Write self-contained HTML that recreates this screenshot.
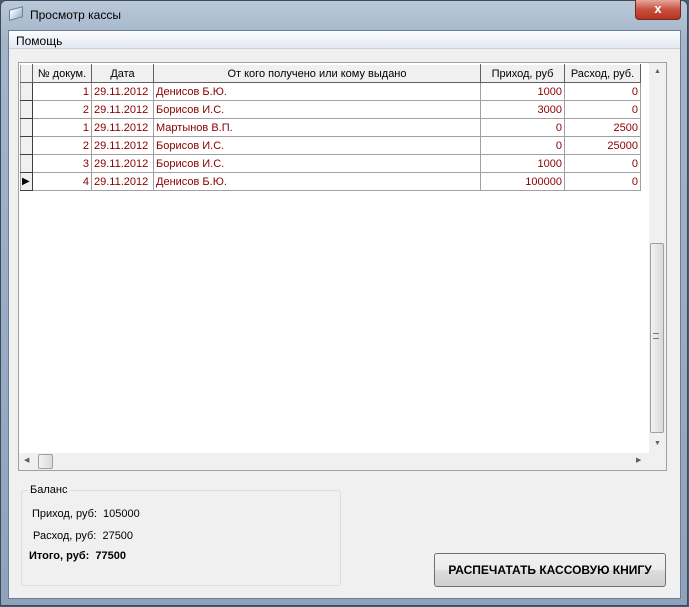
<!DOCTYPE html>
<html><head><meta charset="utf-8"><style>
*{margin:0;padding:0;box-sizing:border-box}
body{width:689px;height:607px;overflow:hidden;background:#4a5a6e;font-family:"Liberation Sans",sans-serif;font-size:11px;position:relative}
.frame{position:absolute;left:0;top:0;width:688px;height:606px;background:linear-gradient(#b9c8d9,#a3b5ca 40px,#8ea3bb);border:1px solid #3c4a5a;border-radius:6px 6px 0 0}
.title{position:absolute;left:30px;top:8px;font-size:12px;color:#000}
.close{position:absolute;left:635px;top:0;width:46px;height:20px;border:1px solid #6e2b22;border-top:none;border-radius:0 0 4px 4px;background:linear-gradient(#e6a89c,#c8503e 50%,#b53522);color:#fff;font-weight:bold;font-size:13px;text-align:center;line-height:18px}
.client{position:absolute;left:8px;top:30px;width:673px;height:569px;background:#f0f0f0;border:1px solid #6d7e92}
.menu{position:absolute;left:0;top:0;width:671px;height:18px;background:linear-gradient(#fbfcfe,#e3e9f2);border-bottom:1px solid #c8d0dc;padding:3px 0 0 7px;font-size:12px}
.grid{position:absolute;left:9px;top:31px;width:649px;height:409px;border:1px solid #a0a0a0;background:#fff}
table{position:absolute;left:1px;top:1px;border-collapse:collapse;font-size:11px;table-layout:fixed}
td{height:18px;border:1px solid #a0a0a0;padding:0 2px;color:#8b0000;white-space:nowrap;overflow:hidden}
th{height:18px;font-weight:normal;border:1px solid #606060;border-top:1px solid #fff;border-left:1px solid #fff;background:#f0f0f0;color:#000;text-align:center;white-space:nowrap;overflow:hidden}
td.ind{background:#f0f0f0;border-right:1px solid #404040;border-bottom:1px solid #404040}
.r{text-align:right}
.vs{position:absolute;left:630px;top:0;width:17px;height:390px;background:#f0f0f0}
.hs{position:absolute;left:0;top:390px;width:647px;height:17px;background:#f0f0f0}
.thumb{position:absolute;background:linear-gradient(90deg,#f2f2f2,#d9d9d9);border:1px solid #a0a0a0;border-radius:2px}
.grp{position:absolute;left:12px;top:459px;width:320px;height:96px;border:1px solid #d5dfe5;border-radius:3px}
.grp .lg{position:absolute;left:6px;top:-7px;background:#f0f0f0;padding:0 2px;font-size:11px}
.lab{position:absolute;font-size:11px}
.btn{position:absolute;left:425px;top:522px;width:232px;height:34px;border:1px solid #707070;border-radius:3px;background:linear-gradient(#f2f2f2,#ebebeb 50%,#dddddd 51%,#cfcfcf);font-weight:bold;font-size:12px;text-align:center;line-height:32px}
</style></head><body>
<div class="frame"></div>
<div style="position:absolute;left:9px;top:8px;width:14px;height:11px;background:linear-gradient(135deg,#fff,#9cb3d6);border:1px solid #6a7f9c;transform:skewY(-15deg)"></div>
<div class="title">Просмотр кассы</div>
<div class="close">x</div>
<div class="client">
<div class="menu">Помощь</div>
<div class="grid">
<table style="width:620px">
<colgroup><col style="width:12px"><col style="width:59px"><col style="width:62px"><col style="width:327px"><col style="width:84px"><col style="width:76px"></colgroup>
<tr><th style="border-left:1px solid #a0a0a0"></th><th>№ докум.</th><th>Дата</th><th>От кого получено или кому выдано</th><th>Приход, руб</th><th>Расход, руб.</th></tr>
<tr><td class="ind"></td><td class="r">1</td><td>29.11.2012</td><td>Денисов Б.Ю.</td><td class="r">1000</td><td class="r">0</td></tr>
<tr><td class="ind"></td><td class="r">2</td><td>29.11.2012</td><td>Борисов И.С.</td><td class="r">3000</td><td class="r">0</td></tr>
<tr><td class="ind"></td><td class="r">1</td><td>29.11.2012</td><td>Мартынов В.П.</td><td class="r">0</td><td class="r">2500</td></tr>
<tr><td class="ind"></td><td class="r">2</td><td>29.11.2012</td><td>Борисов И.С.</td><td class="r">0</td><td class="r">25000</td></tr>
<tr><td class="ind"></td><td class="r">3</td><td>29.11.2012</td><td>Борисов И.С.</td><td class="r">1000</td><td class="r">0</td></tr>
<tr><td class="ind" style="font-size:10px;color:#000;padding:0 0 0 1px">&#9654;</td><td class="r">4</td><td>29.11.2012</td><td>Денисов Б.Ю.</td><td class="r">100000</td><td class="r">0</td></tr>
</table>
<div class="vs"><div style="position:absolute;left:5px;top:5px;font-size:7px;color:#606060">▲</div><div class="thumb" style="left:1px;top:180px;width:14px;height:190px"></div><div style="position:absolute;left:4px;top:270px;width:6px;height:6px;border-top:1px solid #777;border-bottom:1px solid #777"></div><div style="position:absolute;left:5px;top:377px;font-size:7px;color:#606060">▼</div></div>
<div class="hs"><div style="position:absolute;left:5px;top:3px;font-size:7px;color:#606060">◀</div><div class="thumb" style="left:19px;top:1px;width:15px;height:15px"></div><div style="position:absolute;left:617px;top:3px;font-size:7px;color:#606060">▶</div></div>
</div>
<div class="grp"><div class="lg">Баланс</div></div>
<div class="lab" style="left:23px;top:477px">Приход, руб:&nbsp; 105000</div>
<div class="lab" style="left:24px;top:499px">Расход, руб:&nbsp; 27500</div>
<div class="lab" style="left:20px;top:519px;font-weight:bold">Итого, руб:&nbsp; 77500</div>
<div class="btn">РАСПЕЧАТАТЬ КАССОВУЮ КНИГУ</div>
</div>
</body></html>
